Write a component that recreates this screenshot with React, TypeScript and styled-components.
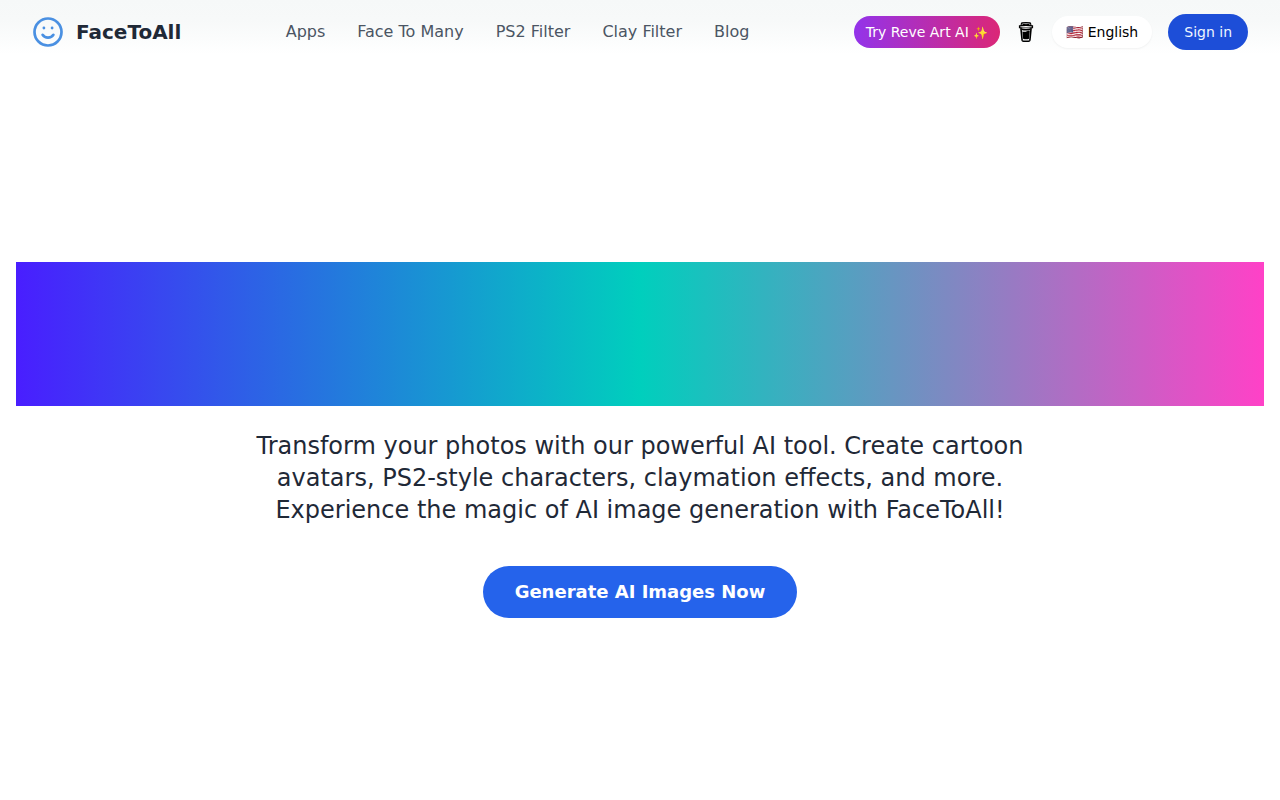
import React from "react";
import styled, { createGlobalStyle } from "styled-components";

const GlobalStyle = createGlobalStyle`
  *, *::before, *::after { box-sizing: border-box; }
  body {
    margin: 0;
    background: #fff;
    color: #1f2937;
    font-family: "DejaVu Sans", "Noto Sans", sans-serif;
    font-size: 16px;
    line-height: 24px;
  }
`;

const Page = styled.div`
  display: flex;
  flex-direction: column;
  min-height: 100vh;
`;

const Header = styled.header`
  display: flex;
  align-items: center;
  justify-content: space-between;
  height: 64px;
  padding: 0 32px;
  background: linear-gradient(to bottom, #f6f8f8 0, #f7f9f9 20px, #fbfcfc 38px, #fff 54px);
`;

const Brand = styled.a`
  display: flex;
  align-items: center;
  gap: 12px;
  color: #1f2937;
  font-size: 20px;
  font-weight: 700;
  line-height: 28px;
  text-decoration: none;
`;

const Nav = styled.nav`
  display: flex;
  gap: 32px;
`;

const NavLink = styled.a`
  color: #4b5563;
  text-decoration: none;
`;

const Actions = styled.div`
  display: flex;
  align-items: center;
  gap: 16px;
`;

const PromoLink = styled.a`
  padding: 6px 12px;
  border-radius: 16px;
  background: linear-gradient(to right, #9333ea, #db2777);
  color: #fff;
  font-size: 14px;
  line-height: 20px;
  text-decoration: none;
`;

const Sparkle = styled.span`
  font-size: 12px;
  line-height: 16px;
`;

const CoffeeLink = styled.a`
  display: flex;
  justify-content: center;
  width: 20px;
`;

const PillButton = styled.button<{ $primary?: boolean }>`
  padding: ${(p) => (p.$primary ? "8px 16px" : "6px 14px")};
  border: 0;
  border-radius: 18px;
  background: ${(p) => (p.$primary ? "#1d4ed8" : "#fff")};
  color: ${(p) => (p.$primary ? "#eff6ff" : "#000")};
  box-shadow: ${(p) => (p.$primary ? "none" : "0 1px 2px rgba(0, 0, 0, 0.05)")};
  font-family: inherit;
  font-size: 14px;
  line-height: 20px;
  cursor: pointer;
`;

const Hero = styled.main`
  flex: 1;
  display: flex;
  flex-direction: column;
  align-items: center;
  padding: 198px 16px 64px;
`;

const Banner = styled.div`
  width: 100%;
  height: 144px;
  background: linear-gradient(to right, #491eff, #00cfbd, #ff41c7);
`;

const Lead = styled.p`
  max-width: 768px;
  margin: 24px 0 40px;
  font-size: 24px;
  line-height: 32px;
  text-align: center;
`;

const GenerateLink = styled.a`
  padding: 12px 32px;
  border-radius: 26px;
  background: #2563eb;
  color: #fff;
  font-size: 18px;
  font-weight: 700;
  line-height: 28px;
  text-decoration: none;
`;

const links = ["Apps", "Face To Many", "PS2 Filter", "Clay Filter", "Blog"];

function SmileLogo() {
  return (
    <svg width="32" height="32" viewBox="0 0 32 32" fill="none" aria-hidden="true">
      <circle cx="16" cy="16" r="13.5" stroke="#4a90e2" strokeWidth="2.7" />
      <circle cx="11.9" cy="12" r="1.4" fill="#4a90e2" />
      <circle cx="20.1" cy="12" r="1.4" fill="#4a90e2" />
      <path d="M10.6 18.8C13 22.6 19 22.6 21.4 18.8" stroke="#4a90e2" strokeWidth="2.7" strokeLinecap="round" />
    </svg>
  );
}

function CoffeeCup() {
  return (
    <svg width="16" height="22" viewBox="0 0 16 22" fill="none" aria-hidden="true">
      <path d="M3 3.8L3.8 2Q8 1.2 12.2 2L13 3.8" stroke="#000" strokeWidth="1.3" fill="#fff" />
      <path d="M4.6 3.6Q8 2.9 11.4 3.6" stroke="#000" strokeWidth="1.1" />
      <path d="M1.6 4.9Q8 3.5 14.4 4.9V6.6Q8 8 1.6 6.6Z" stroke="#000" strokeWidth="1.4" fill="#fff" />
      <path d="M2.9 7.2L4.1 19.2Q4.3 20.3 5.4 20.3H10.6Q11.7 20.3 11.9 19.2L13.1 7.2" stroke="#000" strokeWidth="1.6" fill="#fff" />
      <path d="M3.2 7.3Q8 8.6 12.8 7.3L12.6 9Q8 10 3.4 9Z" fill="#000" />
      <path d="M4.4 10.4Q6.8 11.2 8.8 10.2Q10.4 9.4 11.8 9.8L11 17.8Q8 18.9 5.1 17.8Z" fill="#000" />
    </svg>
  );
}

export default function App() {
  return (
    <Page>
      <GlobalStyle />
      <Header>
        <Brand href="#">
          <SmileLogo />
          FaceToAll
        </Brand>
        <Nav aria-label="Main">
          {links.map((label) => (
            <NavLink key={label} href="#">{label}</NavLink>
          ))}
        </Nav>
        <Actions>
          <PromoLink href="#">Try Reve Art AI <Sparkle>✨</Sparkle></PromoLink>
          <CoffeeLink href="#" aria-label="Buy me a coffee"><CoffeeCup /></CoffeeLink>
          <PillButton type="button">🇺🇸 English</PillButton>
          <PillButton type="button" $primary>Sign in</PillButton>
        </Actions>
      </Header>
      <Hero>
        <Banner />
        <Lead>
          Transform your photos with our powerful AI tool. Create cartoon avatars, PS2-style
          characters, claymation effects, and more. Experience the magic of AI image generation with
          FaceToAll!
        </Lead>
        <GenerateLink href="#">Generate AI Images Now</GenerateLink>
      </Hero>
    </Page>
  );
}
